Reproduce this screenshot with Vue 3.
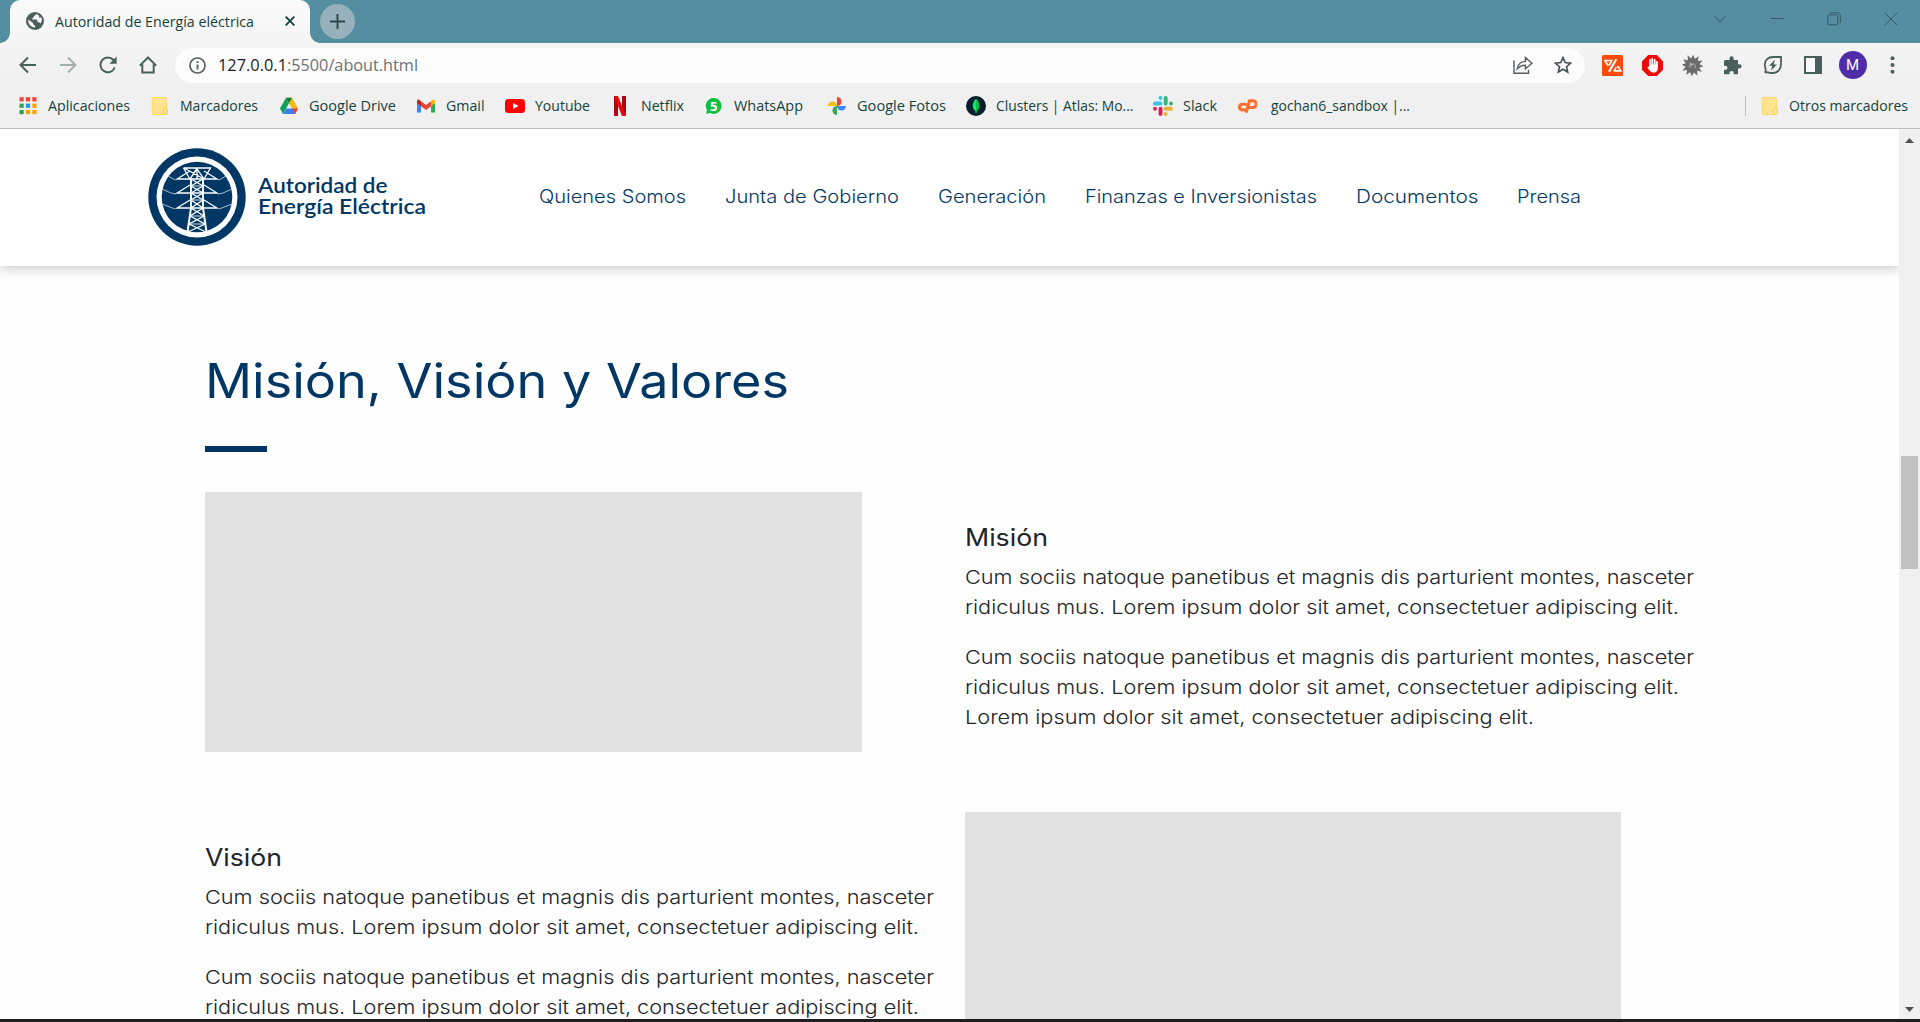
<script setup>
// Stretches a line of text to a given advance width and keeps that width in the layout.
const vFit = {
  mounted(el, { value }) {
    const natural = el.getBoundingClientRect().width
    el.style.transform = `scaleX(${value / natural})`
    el.style.marginRight = `${value - natural}px`
  },
}

const bookmarks = [
  { icon: 'apps', label: 'Aplicaciones', w: 82, cell: 132 },
  { icon: 'folder', label: 'Marcadores', w: 78, cell: 128.5 },
  { icon: 'drive', label: 'Google Drive', w: 87, cell: 137.5 },
  { icon: 'gmail', label: 'Gmail', w: 38.5, cell: 88.5 },
  { icon: 'youtube', label: 'Youtube', w: 55, cell: 106 },
  { icon: 'netflix', label: 'Netflix', w: 43, cell: 93 },
  { icon: 'whatsapp', label: 'WhatsApp', w: 69, cell: 123.5 },
  { icon: 'photos', label: 'Google Fotos', w: 89, cell: 138.5 },
  { icon: 'mongo', label: 'Clusters | Atlas: Mo...', w: 137.5, cell: 187.5 },
  { icon: 'slack', label: 'Slack', w: 34, cell: 83.5 },
  { icon: 'cpanel', label: 'gochan6_sandbox |...', w: 139, cell: 200 },
]

const nav = [
  ['Quienes Somos', 147],
  ['Junta de Gobierno', 174],
  ['Generación', 108],
  ['Finanzas e Inversionistas', 232],
  ['Documentos', 122.5],
  ['Prensa', 64],
]

const l1 = ['Cum sociis natoque panetibus et magnis dis parturient montes, nasceter', 729]
const l2 = ['ridiculus mus. Lorem ipsum dolor sit amet, consectetuer adipiscing elit.', 714]
const l3 = ['Lorem ipsum dolor sit amet, consectetuer adipiscing elit.', 569]
const mision = [[l1, l2], [l1, l2, l3]]
const vision = [[l1, l2], [l1, l2]]

const appColors = ['#f44336', '#f44336', '#f44336', '#2ba24c', '#2196f3', '#ffa000', '#2ba24c', '#ffa000', '#ffa000']
const teeth = Array.from({ length: 12 }, (_, i) => i * 30)
</script>

<template>
  <div class="screen">
    <div class="tabstrip">
      <div class="tab">
        <svg class="favicon" width="18" height="18" viewBox="0 0 18 18">
          <circle cx="9" cy="9" r="9" fill="#4a5f59" />
          <path d="M10.500 2 7.800 4.200v1.500H6.300v1.800h3.900l1.300 1.200v1.500h1.600l1.200 1.300c1-1 1.600-2.400 1.600-4 0-.8-.2-1.400-.5-2h-2.400V3.600zM2.200 7.600c-.4 4 2.500 7.700 6.800 8.100v-2.100l-1.900-1.400V11z" fill="#f6f6f6" />
        </svg>
        <span v-fit="199" class="tab-title">Autoridad de Energía eléctrica</span>
        <svg class="tab-close" width="10" height="10" viewBox="0 0 10 10"><path d="M.6.6l8.800 8.800M9.400.6.6 9.400" stroke="#16423c" stroke-width="1.900" /></svg>
      </div>
      <div class="newtab">
        <svg width="15" height="15" viewBox="0 0 15 15"><path d="M7.500 0v15M0 7.500h15" stroke="#2c4a49" stroke-width="2" /></svg>
      </div>
      <div class="wincontrols">
        <svg width="14" height="14" viewBox="0 0 14 14"><path d="M.8 3.500 7 9.700l6.200-6.200" /></svg>
        <svg width="14" height="14" viewBox="0 0 14 14"><path d="M.5 6.500h13" /></svg>
        <svg width="14" height="14" viewBox="0 0 14 14"><rect x=".8" y="2.800" width="10" height="10" rx="1.500" /><path d="M3 .7h7.500q2.800 0 2.800 2.800V11" /></svg>
        <svg width="14" height="14" viewBox="0 0 14 14"><path d="M.8.8l12.400 12.400M13.200.8.8 13.200" /></svg>
      </div>
    </div>

    <div class="toolbar">
      <div class="cell"><svg width="18" height="18" viewBox="0 0 18 18"><path class="ln" d="M17 9H2M9 1.500 1.500 9 9 16.500" /></svg></div>
      <div class="cell dim"><svg width="18" height="18" viewBox="0 0 18 18"><path class="ln" d="M1 9h15M9 1.500 16.500 9 9 16.500" /></svg></div>
      <div class="cell"><svg width="18" height="18" viewBox="0 0 18 18"><path class="ln" d="M15.800 11.500A7.400 7.400 0 1 1 14.500 4L16 6" /><path d="M17.600.6v7.200h-7.200z" fill="#4a5f59" /></svg></div>
      <div class="cell"><svg width="18" height="18" viewBox="0 0 18 18"><path class="ln" d="M.8 9.600 9 1.500l8.200 8.100M3.300 8.200v8.300h11.400V8.200" /></svg></div>
      <div class="omnibox">
        <svg class="info" width="17" height="17" viewBox="0 0 17 17"><circle cx="8.500" cy="8.500" r="7.500" fill="none" stroke="#5b6164" stroke-width="1.700" /><path d="M8.500 7.500v5M8.500 4.200v1.900" stroke="#5b6164" stroke-width="1.900" /></svg>
        <span v-fit="69" class="url host">127.0.0.1</span><span v-fit="131" class="url">:5500/about.html</span>
        <div class="omni-actions">
          <svg width="20" height="18" viewBox="0 0 20 18"><path d="M1 4.500v12.700h14.500v-3.500M4.200 12.800C5 8.300 8 5.600 12.400 5.400V1.500l6.600 5.700-6.600 5.600V9.200c-3.600 0-6 1.200-8.200 3.600z" fill="none" stroke="#555d61" stroke-width="1.400" /></svg>
          <svg width="18" height="18" viewBox="0 0 18 18"><path d="m9 1.600 2.200 5 5.400.5-4.100 3.600 1.200 5.300L9 13.200 4.300 16l1.200-5.300L1.400 7.100l5.400-.5z" fill="none" stroke="#454e52" stroke-width="1.600" /></svg>
        </div>
      </div>
      <div class="ext">
        <div class="cell"><svg width="21" height="21" viewBox="0 0 21 21"><rect width="21" height="21" rx="1.500" fill="#ff4a0c" /><path d="M14.300 4.200 7 16.800" fill="none" stroke="#fff" stroke-width="2.200" /><path d="M2 5.500h7.500L7.200 10.300M3 6l3.300 4.700M11.500 15.800h7.300L15.500 11M12.500 15.500l1.700-3.500" fill="none" stroke="#fff" stroke-width="1.700" /></svg></div>
        <div class="cell"><svg width="21" height="21" viewBox="0 0 21 21"><path d="M6.200 0h8.600L21 6.200v8.600L14.800 21H6.200L0 14.800V6.200z" fill="#ec0a0a" /><path d="M8 11V5M10.300 10V3.800M12.700 10V5M15 11.500V7" stroke="#fff" stroke-width="1.800" stroke-linecap="round" /><path d="M7.100 9.500h8.800v3.500c0 2.800-1.700 4.700-4.200 4.700-2.700 0-4-1.700-6.300-5.400l1-.7 1.200 1z" fill="#fff" /></svg></div>
        <div class="cell"><svg width="21" height="21" viewBox="0 0 21 21"><path v-for="a in teeth" :key="a" d="M9.500 4l1.700-3.400 1 3.400z" fill="#6b6b6b" stroke="#6b6b6b" :transform="`rotate(${a} 10.500 10.500)`" /><circle cx="10.500" cy="10.500" r="7" fill="#6b6b6b" /><path d="M7.300 7.600l3 2.500M8 12.800q.5-3 4-4.200 2.800 2 .7 4.700M6.700 11l3.500-3" fill="none" stroke="#b5b5b5" stroke-width="1" /></svg></div>
        <div class="cell"><svg width="19" height="19" viewBox="0 0 19 19"><path d="M2.500 4h4.300c-.8-2 .2-3.700 1.800-3.700S11.200 2 10.500 4H15v4.500c2-.7 3.600.2 3.600 1.800S17 12.800 15 12.200V18.300h-4.400c.5-2.200-.6-3.300-2-3.300s-2.500 1.100-2 3.300H1v-4.600c2.200.5 3.400-.6 3.400-2S3.200 9.200 1 9.800V5.500Q1 4 2.500 4z" fill="#4a5f59" /></svg></div>
        <div class="cell"><svg width="20" height="20" viewBox="0 0 20 20"><path d="M2 17.800c2-1.500 3.800.2 7.500.2 5.500 0 8.500-4 8.500-9V2h-8C5 2 1.800 5 1.800 9.500c0 3.300 2 5 .2 8.300z" fill="none" stroke="#4a5f59" stroke-width="1.800" /><path d="m12 4.800-6 6h3.200L8 15.400l6-6h-3.300z" fill="#4a5f59" /></svg></div>
        <div class="cell"><svg width="18" height="18" viewBox="0 0 18 18"><rect x="1" y="1" width="16" height="16" fill="#fafafa" stroke="#4a5f59" stroke-width="2" /><path d="M11 1h6v16h-6z" fill="#4a5f59" /></svg></div>
        <div class="cell"><span class="avatar">M</span></div>
        <div class="cell"><svg width="5" height="18" viewBox="0 0 5 18"><circle cx="2.500" cy="2.300" r="2" fill="#4a5f59" /><circle cx="2.500" cy="9" r="2" fill="#4a5f59" /><circle cx="2.500" cy="15.700" r="2" fill="#4a5f59" /></svg></div>
      </div>
    </div>

    <div class="bookmarks">
      <div v-for="b in bookmarks" :key="b.icon" class="bm" :style="{ width: b.cell + 'px' }">
        <svg class="bm-icon" width="20" height="20" viewBox="0 0 20 20">
          <template v-if="b.icon === 'apps'">
            <rect v-for="(c, i) in appColors" :key="i" :x="1.500 + (i % 3) * 6.400" :y="1.200 + Math.floor(i / 3) * 6.400" width="4.200" height="4.200" :fill="c" />
          </template>
          <template v-else-if="b.icon === 'folder'">
            <rect x="2.300" y="1.500" width="14" height="17" rx="1" fill="#ffe38e" stroke="#f9d866" />
            <path d="M13.500 18.500v-5q0-1.800 1.500-1.800t1.500 1.800h1v3.500q0 1.500-1.500 1.500z" fill="#ffe38e" stroke="#f5d155" />
          </template>
          <template v-else-if="b.icon === 'drive'">
            <path d="M7 1.800 1 12.500l3 5.500 6-10.700z" fill="#11a25a" /><path d="M7 1.800h6l6 10.700h-6z" fill="#fbb905" /><path d="M7 1.800h6L10 7.300z" fill="#0b8043" />
            <path d="M7.200 12.500H19L16 18H4z" fill="#3b7ff0" /><path d="M13 12.500h6L16 18z" fill="#ea4335" />
          </template>
          <template v-else-if="b.icon === 'gmail'">
            <path d="M1 5.500v11h4V9z" fill="#4285f4" /><path d="M19 5.500v11h-4V9z" fill="#34a853" />
            <path d="M15 5.200 17 3.600q2-.8 2 1.500V7l-4 3.200z" fill="#fbbc04" /><path d="M5 5.200 3 3.600Q1 2.800 1 5.100V7l4 3.200z" fill="#c5221f" /><path d="m5 5.200 5 3.900 5-3.900v5l-5 3.900-5-3.900z" fill="#ea4335" />
          </template>
          <template v-else-if="b.icon === 'youtube'"><rect y="3" width="20" height="14" rx="3.500" fill="#f00" /><path d="m8 7 5.500 3L8 13z" fill="#fff" /></template>
          <template v-else-if="b.icon === 'netflix'"><path d="M3 0h4v20H3zM11 0h4v20h-4z" fill="#b1060f" /><path d="M3 0h4l8 20h-4z" fill="#e50914" /></template>
          <template v-else-if="b.icon === 'whatsapp'"><path d="M.5 19.500l.8-5.500A9 9 0 1 1 5.500 18z" fill="#fff" /><path d="M2 18l.8-4A8 8 0 1 1 6 17z" fill="#10c143" /><text x="9.700" y="14.700" font-size="13" font-weight="700" text-anchor="middle" fill="#fff">5</text></template>
          <template v-else-if="b.icon === 'photos'">
            <path d="M10 10V1a4.500 4.500 0 0 1 0 9z" fill="#ea4335" /><path d="M10 10h9a4.500 4.500 0 0 1-9 0z" fill="#4285f4" /><path d="M10 10v9a4.500 4.500 0 0 1 0-9z" fill="#34a853" /><path d="M10 10H1a4.500 4.500 0 0 1 9 0z" fill="#fbbc04" />
          </template>
          <template v-else-if="b.icon === 'mongo'"><circle cx="10" cy="10" r="10" fill="#051e2b" /><path d="M10 2.800q3.600 3.500 3.300 7.700-.3 3.300-2.800 4.800l-.2 2.200h-.6l-.2-2.200Q7 13.600 6.700 10.500 6.400 6.500 10 2.800z" fill="#00ed64" /><path d="M10 4v13q3-4 2.900-7Q12.700 6.500 10 4z" fill="#00b94e" /></template>
          <template v-else-if="b.icon === 'slack'">
            <g stroke-width="3.900" stroke-linecap="round"><path d="M2 7.500h5.500M7.500 2h0" stroke="#36c5f0" /><path d="M12.700 2v5.500M18 7.500h0" stroke="#2eb67d" /><path d="M18 12.700h-5.300M12.700 18h0" stroke="#ecb22e" /><path d="M7.500 18v-5.300M2 12.700h0" stroke="#e01e5a" /></g>
          </template>
          <template v-else><path d="M8.300 8.200H4.900a2.900 2.900 0 0 0 0 5.700h2.400M9.500 15.300l2.900-10.500H16a3.300 3.300 0 0 1 0 6.700h-2.600" fill="none" stroke="#ff6c2c" stroke-width="3.100" stroke-linecap="round" stroke-linejoin="round" /></template>
        </svg>
        <span v-fit="b.w" class="bm-label" :class="{ shifted: b.icon === 'cpanel' }">{{ b.label }}</span>
      </div>
      <div class="bm other">
        <svg class="bm-icon" width="20" height="20" viewBox="0 0 20 20"><rect x="2.300" y="1.500" width="14" height="17" rx="1" fill="#ffe38e" stroke="#f9d866" /><path d="M13.500 18.500v-5q0-1.800 1.500-1.800t1.500 1.800h1v3.500q0 1.500-1.500 1.500z" fill="#ffe38e" stroke="#f5d155" /></svg>
        <span v-fit="119" class="bm-label">Otros marcadores</span>
      </div>
    </div>

    <div class="viewport">
      <div class="page">
        <header class="site-header">
          <svg class="emblem" width="98" height="98" viewBox="-49 -49 98 98">
            <circle r="48.700" fill="#003764" /><circle r="40.500" fill="#fff" /><circle r="35.300" fill="#003764" />
            <g fill="none" stroke="#fff" stroke-width="1.300">
              <path d="M-13.500-29h27L7-18-13-29M-13.500-29-7-18 0-28 7-18 13.500-29M0-29-7-18M0-29V-18" />
              <path d="M-7-26-20-18h40L7-26M-7-12-20-4h40L7-12M-7 3l-13 8h40L7 3" />
              <path d="M-6-18V11L-9.500 35M6-18V11L9.500 35" stroke-width="2" />
              <path d="M-6-18 6-11-6-4 6 3-6 11 7 19-8 27 9 35M6-18-6-11 6-4-6 3 6 11-7 19 8 27-9 35" />
              <path d="M-6-11H6M-6 3H6M-7 19H7M-8 27H8" stroke-width=".8" />
              <path d="M-29-21l7 4M-35-8l9 4 5 1M-35 7l13 5M29-21l-7 4M35-8l-9 4-5 1M35 7l-13 5" stroke-width=".9" stroke="#b9cbd9" />
            </g>
          </svg>
          <div class="brand">
            <span v-fit="129.500" class="brand-line">Autoridad de</span>
            <span v-fit="168" class="brand-line">Energía Eléctrica</span>
          </div>
          <nav class="nav">
            <a v-for="n in nav" :key="n[0]" class="nav-link"><span v-fit="n[1]" class="fit">{{ n[0] }}</span></a>
          </nav>
        </header>

        <main class="content">
          <h1 class="title"><span v-fit="584" class="fit">Misión, Visión y Valores</span></h1>
          <div class="rule"></div>
          <section class="row">
            <div class="placeholder"></div>
            <div class="copy">
              <h2 class="sub"><span v-fit="83" class="fit">Misión</span></h2>
              <p v-for="(p, i) in mision" :key="i" class="para"><span v-for="l in p" :key="l[0]" class="line"><span v-fit="l[1]" class="fit">{{ l[0] }}</span></span></p>
            </div>
          </section>
          <section class="row">
            <div class="copy">
              <h2 class="sub"><span v-fit="77" class="fit">Visión</span></h2>
              <p v-for="(p, i) in vision" :key="i" class="para"><span v-for="l in p" :key="l[0]" class="line"><span v-fit="l[1]" class="fit">{{ l[0] }}</span></span></p>
            </div>
            <div class="placeholder second"></div>
          </section>
        </main>
      </div>
      <div class="scrollbar">
        <svg width="9" height="5" viewBox="0 0 9 5"><path d="M4.500 0 9 5H0z" fill="#505050" /></svg>
        <div class="thumb"></div>
        <svg class="down" width="9" height="5" viewBox="0 0 9 5"><path d="M0 0h9L4.500 5z" fill="#505050" /></svg>
      </div>
    </div>
    <div class="taskbar-edge"></div>
  </div>
</template>

<style>
body { margin: 0; overflow: hidden; }
</style>

<style scoped>
.screen { width: 1920px; height: 1022px; display: flex; flex-direction: column; overflow: hidden; background: #fff; font-family: "Open Sans", "Noto Sans", sans-serif; }
.fit, .tab-title, .url, .bm-label, .brand-line { display: inline-block; white-space: pre; transform-origin: 0 50%; flex: none; }

.tabstrip { height: 43px; flex: none; display: flex; background: #568ea1; box-sizing: border-box; padding-left: 10px; }
.tab { position: relative; width: 300px; height: 43px; box-sizing: border-box; background: linear-gradient(#fafafa, #f4f4f4); border-radius: 10px 10px 0 0; display: flex; align-items: center; padding: 0 15px 1px 16px; }
.tab::before, .tab::after { content: ""; position: absolute; bottom: 0; width: 10px; height: 10px; }
.tab::before { left: -10px; background: radial-gradient(circle at 0 0, transparent 9.5px, #f4f4f4 10px); }
.tab::after { right: -10px; background: radial-gradient(circle at 100% 0, transparent 9.5px, #f4f4f4 10px); }
.tab-title { margin-left: 11px; margin-top: -1px; font-size: 15px; line-height: 20px; color: #16423c; }
.favicon { flex: none; }
.tab-close { margin-left: auto; }
.newtab { width: 35px; height: 35px; margin: 4px 0 0 10px; border-radius: 50%; background: #96b1bb; display: flex; align-items: center; justify-content: center; }
.wincontrols { margin: 12px 22px 0 auto; display: flex; gap: 43px; height: 14px; }
.wincontrols svg { fill: none; stroke: #36596a; stroke-width: 1; }

.toolbar { height: 43px; flex: none; box-sizing: border-box; display: flex; align-items: center; background: linear-gradient(#f4f4f4, #f0f0f0); padding: 1px 0 0 7.500px; }
.cell { width: 40px; height: 40px; display: flex; align-items: center; justify-content: center; flex: none; }
.ln { fill: none; stroke: #4a5f59; stroke-width: 2; }
.dim { opacity: .45; }
.omnibox { margin-left: 7.500px; width: 1410px; height: 35px; border-radius: 18px; background: #fcfcfc; display: flex; align-items: center; box-sizing: border-box; padding: 0 13px 0 14px; }
.info { margin-right: 12px; }
.url { font-size: 17px; line-height: 24px; color: #6c7176; }
.url.host { color: #1b1d1f; }
.omni-actions { margin-left: auto; display: flex; align-items: center; gap: 21px; }
.ext { margin-left: 7.500px; display: flex; }
.avatar { width: 28px; height: 28px; border-radius: 50%; background: #4f2da8; color: #fff; font: 15px/28px Roboto, sans-serif; text-align: center; }

.bookmarks { height: 43px; flex: none; box-sizing: border-box; border-bottom: 1px solid #b9bfbd; background: #f0f0f0; display: flex; padding: 0 0 3px 18px; }
.bm { display: flex; align-items: center; flex: none; }
.bm-icon { flex: none; font-family: "Open Sans", sans-serif; }
.bm-label { margin-left: 10px; margin-top: -2px; font-size: 15px; line-height: 20px; color: #16423c; }
.bm-label.shifted { margin-left: 14px; }
.other { margin-left: auto; margin-right: 12.500px; padding-left: 14px; height: 20px; align-self: center; border-left: 1px solid #bcc3c1; }
.other .bm-label { margin-left: 9px; }

.viewport { flex: 1; min-height: 0; display: flex; }
.page { width: 1899px; overflow: hidden; background: #fefefe; font-family: Inter, sans-serif; }
.site-header { height: 137px; box-sizing: border-box; background: #fff; box-shadow: 0 4px 9px rgba(0, 0, 0, .17); display: flex; align-items: center; padding-left: 147.500px; }
.emblem { flex: none; margin-top: -1px; }
.brand { width: 280.500px; padding-left: 12.500px; display: flex; flex-direction: column; align-items: flex-start; margin-top: -3px; }
.brand-line { font: 600 20.500px/21.500px Lato, sans-serif; color: #003764; }
.nav { display: flex; gap: 39px; margin-top: -3px; }
.nav-link { font-size: 18.300px; line-height: 24px; font-weight: 300; color: #003764; }

.content { padding: 85px 0 0 205px; }
.title { margin: 0; height: 60px; font-size: 48px; line-height: 60px; font-weight: 400; color: #003764; }
.rule { width: 62px; height: 6px; margin: 35px 0 40px; background: #003366; }
.row { display: grid; grid-template-columns: 760px 760px; height: 320px; }
.placeholder { width: 657px; height: 260px; background: #e1e1e1; }
.placeholder.second { width: 656px; }
.copy { padding-top: 31px; color: #212529; }
.sub { margin: 0 0 10px; height: 29px; font-size: 24px; line-height: 29px; font-weight: 400; }
.para { margin: 0 0 20px; font-size: 19.200px; line-height: 30px; font-weight: 300; }
.line { display: block; height: 30px; }

.scrollbar { width: 21px; background: #f0f0f0; display: flex; flex-direction: column; align-items: center; box-sizing: border-box; padding: 9px 0 7px; }
.thumb { width: 17px; height: 113px; margin-top: 313px; background: #c1c1c1; }
.down { margin-top: auto; }
.taskbar-edge { height: 3px; flex: none; background: #1f1d20; }
</style>
